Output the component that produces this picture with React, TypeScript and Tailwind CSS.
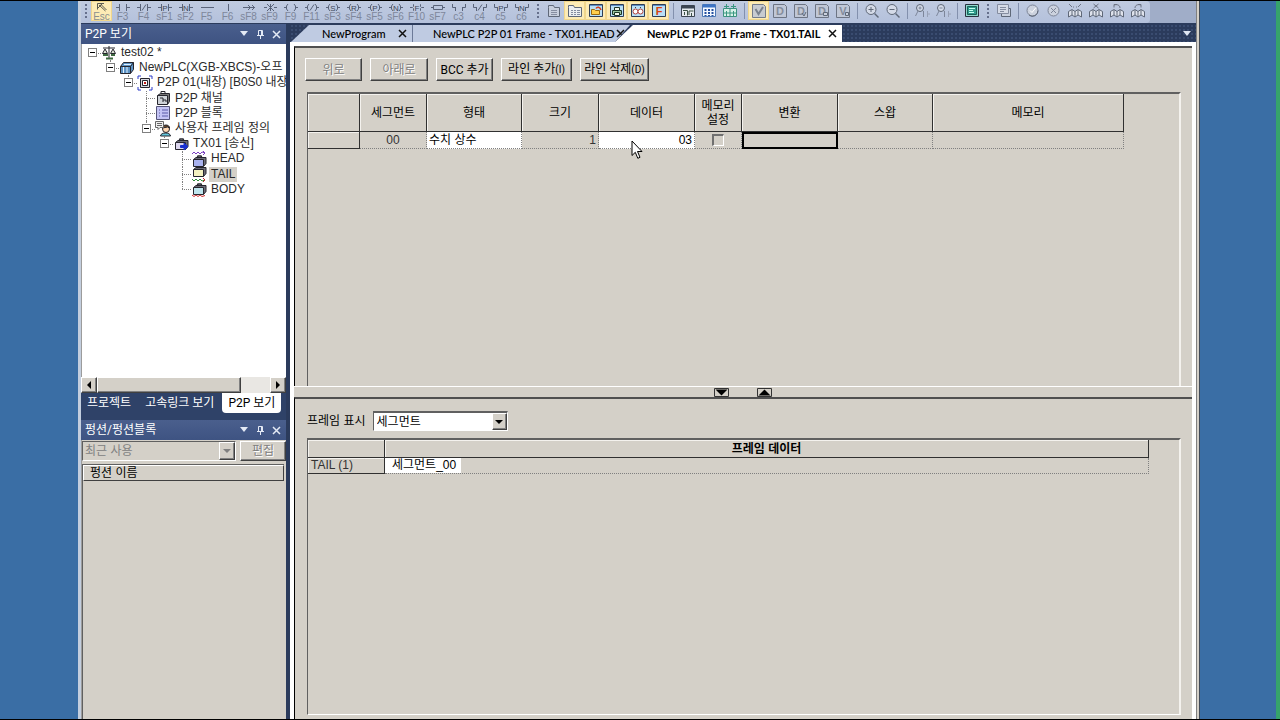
import React from 'react';
import { clsx } from 'clsx';

const RAISED = 'border border-t-white border-l-white border-r-[#404040] border-b-[#404040] bg-[#d4d0c8] shadow-[inset_-1px_-1px_0_#808080]';
const ICON = 'w-4 h-4 shrink-0';
const UI_FONT = "font-['Roboto','Noto_Sans_CJK_KR',sans-serif]";

/* ---------- toolbar ---------- */

interface LadderItem {
  label: string;
  kind: string;
}

const LADDER: LadderItem[] = [
  { label: 'F3', kind: 'contact' },
  { label: 'F4', kind: 'contact/' },
  { label: 'sF1', kind: 'contactP' },
  { label: 'sF2', kind: 'contactN' },
  { label: 'F5', kind: 'hline' },
  { label: 'F6', kind: 'vline' },
  { label: 'sF8', kind: 'arrow' },
  { label: 'sF9', kind: 'invert' },
  { label: 'F9', kind: 'coil' },
  { label: 'F11', kind: 'coil/' },
  { label: 'sF3', kind: 'coilS' },
  { label: 'sF4', kind: 'coilR' },
  { label: 'sF5', kind: 'coilP' },
  { label: 'sF6', kind: 'coilN' },
  { label: 'F10', kind: 'braceF' },
  { label: 'sF7', kind: 'box' },
  { label: 'c3', kind: 'or' },
  { label: 'c4', kind: 'or/' },
  { label: 'c5', kind: 'orP' },
  { label: 'c6', kind: 'orN' },
];

const LADDER_PATHS: Record<string, string> = {
  contact: 'M1 5.500h3M4.500 2v7M11.500 2v7M12 5.500h3',
  hline: 'M2 5.500h13',
  vline: 'M8.500 2v7',
  arrow: 'M2 5.500h12M7 3l2.500 2.500L7 8M11 3l2.500 2.500L11 8',
  invert: 'M2 5.500h3M12 5.500h3M5 2l7 7M12 2L5 9M8.500 2v7',
  coil: 'M1 5.500h2M5 2L3.500 4v3L5 9M11 2l1.500 2v3L11 9M13 5.500h2',
  brace: 'M1 5.500h2M5 2.500h-.5v2l-1 1 1 1v2H5M11 2.500h.5v2l1 1-1 1v2H11M13 5.500h2',
  box: 'M1 5.500h2M3.500 3.500h9v4h-9zM13 5.500h2',
  or: 'M1.500 2v3.500h3M4.500 5v4M11.500 5v4M11.500 5.500h3V2',
};

const LadderIcon: React.FC<{ kind: string }> = ({ kind }) => {
  const mark = /[/A-Z]$/.test(kind) ? kind.slice(-1) : '';
  const base = mark ? kind.slice(0, -1) : kind;
  return (
    <svg viewBox="0 0 16 10" className="w-4 h-[10px] shrink-0" fill="none" stroke="#5a6479">
      <path d={LADDER_PATHS[base]} />
      {mark === '/' && <path d="M6 8.500l4-6" />}
      {mark !== '' && mark !== '/' && (
        <text x="8" y="9" textAnchor="middle" fontSize="8" fill="#3f4859" stroke="none">{mark}</text>
      )}
    </svg>
  );
};

const Grip = () => (
  <span className="w-[10px] h-[19px] flex flex-col items-center justify-center gap-[2px] shrink-0">
    {[0, 1, 2, 3].map(i => <span key={i} className="w-[2px] h-[2px] bg-[#66708c]" />)}
  </span>
);

const Sep = () => <span className="w-2 h-[19px] shrink-0 flex items-center justify-center"><span className="w-px h-4 bg-[#8390ad]" /></span>;

interface ToolProps {
  name: string;
  on?: boolean;
  children: React.ReactNode;
}

const Tool: React.FC<ToolProps> = ({ name, on, children }) => (
  <button
    type="button"
    aria-label={name}
    className={clsx('w-[21px] h-[19px] shrink-0 flex items-center justify-center', on && 'bg-[#fdebb5] border border-[#f0d68c]')}
  >
    <svg viewBox="0 0 16 16" className={ICON} fill="none" stroke="#5f6878">{children}</svg>
  </button>
);

const Frame = () => (
  <>
    <path d="M1.500 1.500h13v12h-13z" fill="#b9e0f7" stroke="#2e3d55" />
    <path d="M2 2.500h12" stroke="#5f8fc4" />
  </>
);
const Letter: React.FC<{ c: string }> = ({ c }) => (
  <>
    <path d="M1.500 1.500h11l2 2v11h-13z" fill="#c0c7d6" stroke="#6c7484" />
    <text x="8" y="12" textAnchor="middle" fontSize="11" fontWeight="bold" fill="#858d9c" stroke="none">{c}</text>
  </>
);
const Book: React.FC<{ mark: string }> = ({ mark }) => (
  <>
    <path d="M1.500 14V8.500L5 6.500l3 2 3-2 3.500 2V14L11 12l-3 2-3-2zM8 8.500V14M5 7v5M11 7v5" fill="#dfe3ec" />
    <path d={mark} stroke="#6d7484" />
  </>
);

const Toolbar = () => (
  <div className="h-[22px] shrink-0 flex bg-[#a0adc8]">
    <div className="flex items-start gap-px bg-gradient-to-b from-[#c0cbe0] to-[#b4c1dc] pr-[2px] rounded-r-sm">
      <div className="flex">
        <Grip />
        <button type="button" className="w-[21px] h-5 shrink-0 flex flex-col items-center bg-[#fdebb5] border border-[#f0d68c] text-[10px] leading-[9px] text-[#8b8f8e]">
          <svg viewBox="0 0 16 10" className="w-4 h-[10px] shrink-0" fill="none" stroke="#5c5b50"><path d="M3.500 7.500v-6H10M5 3l6.500 6M8 2l-4 4M7 2.500L12.500 8" /></svg>
          Esc
        </button>
        {LADDER.map(item => (
          <button type="button" key={item.label} className="w-[21px] h-5 shrink-0 flex flex-col items-center pt-px text-[10px] leading-[9px] text-[#7e879b]">
            <LadderIcon kind={item.kind} />
            {item.label}
          </button>
        ))}
      </div>
      <div className="flex">
        <Grip />
        <Tool name="Project"><path d="M2.500 4.500V2.500h5l1 2h5v9h-11z" fill="#c8cfdd" /><path d="M5 7.500h6M5 9.500h6M5 11.500h6" stroke="#858da0" /></Tool>
        <Tool name="Variables" on><path d="M1.500 4.500V2.500h5l1 2h7v9h-13z" fill="#eceef0" /><path d="M4 7.500h2M7 7.500h2M10 7.500h3M4 9.500h2M7 9.500h2M10 9.500h3M4 11.500h2M7 11.500h2M10 11.500h3" stroke="#858da0" /></Tool>
        <Tool name="Open view" on><Frame /><path d="M3.500 6.500h3l1 1h4v4h-8z" fill="#ffcf4d" stroke="#9a6a10" /><path d="M8 5.500c1-2 4-2 5 1.500" stroke="#d43d1c" strokeWidth="1.500" /></Tool>
        <Tool name="Print view" on><Frame /><path d="M3.500 7.500h9v4h-9z" fill="#9cc7a0" stroke="#1d3526" /><path d="M5.500 4.500h5v3h-5zM5.500 9.500h5v3h-5z" fill="#f4f8ee" stroke="#1d3526" /></Tool>
        <Tool name="Find view" on><Frame /><circle cx="5.500" cy="8.500" r="2.500" fill="#fff" stroke="#b3423a" /><circle cx="10.500" cy="8.500" r="2.500" fill="#fff" stroke="#b3423a" /><path d="M5 5l1-1M11 5l-1-1" stroke="#39404c" /></Tool>
        <Tool name="Function view" on><Frame /><text x="8" y="12" textAnchor="middle" fontSize="11" fontWeight="bold" fill="#d8430f" stroke="none">F</text></Tool>
        <Sep />
        <Tool name="Monitor"><path d="M1.500 2.500h13v11h-13z" fill="#e6ebf0" stroke="#3b4552" /><path d="M2 4h12" stroke="#3b4552" strokeWidth="3" /><path d="M3 7.500h4.500v5M9 12V8h4.500M4.500 9v3M11.500 10v3" stroke="#3a5145" /></Tool>
        <Tool name="Device monitor"><path d="M1.500 1.500h13v12h-13z" fill="#f3f8ff" stroke="#4b77b5" /><path d="M2 3h12" stroke="#3c74c4" strokeWidth="3" /><path d="M4.500 6v7M8 6v7M11.500 6v7" stroke="#2450a0" strokeWidth="2" strokeDasharray="2 1" /></Tool>
        <Tool name="Trend monitor"><path d="M1.500 5.500h13v8h-13z" fill="#d7f1e9" stroke="#3d9280" /><path d="M4.500 1v5M2 3.500h5M11.500 1v5M9 3.500h5M4.500 8v5M8 6v7M11.500 8v5M2 10h12" stroke="#399780" /></Tool>
        <Sep />
        <Tool name="Check" on><path d="M1.500 1.500h11l2 2v11h-13z" fill="#c8cbd0" stroke="#747c8c" /><path d="M4.500 6l3 5 4.500-7" strokeWidth="2" stroke="#7b828e" /></Tool>
        <Tool name="Device"><Letter c="D" /></Tool>
        <Tool name="Device variable"><Letter c="D" /><path d="M9 10l2 3 2-4" /></Tool>
        <Tool name="Device comment"><Letter c="D" /><path d="M9.500 9.500h4v3h-4z" fill="#cbd1dd" /></Tool>
        <Tool name="Variable comment"><Letter c="V" /><path d="M10.500 9.500h3v3h-3z" fill="#cbd1dd" /></Tool>
        <Sep />
        <Tool name="Zoom in"><circle cx="7" cy="6.500" r="5" fill="#d5dbe8" /><path d="M7 4v5M4.500 6.500h5" /><path d="M10.500 10.500l4 4" strokeWidth="1.500" /></Tool>
        <Tool name="Zoom out"><circle cx="7" cy="6.500" r="5" fill="#d5dbe8" /><path d="M4.500 6.500h5" /><path d="M10.500 10.500l4 4" strokeWidth="1.500" /></Tool>
        <Sep />
        <Tool name="Widen"><circle cx="6" cy="5" r="3.500" fill="#d5dbe8" /><path d="M6 3.500v3M4.500 5h3M4 8l-2.500 5M9.500 8v6" stroke="#7d869a" /><path d="M13.500 8v6M14 11h2" stroke="#98a1b6" /></Tool>
        <Tool name="Narrow"><circle cx="6" cy="5" r="3.500" fill="#d5dbe8" /><path d="M4.500 5h3M4 8l-2.500 5M9.500 8v6" stroke="#7d869a" /><path d="M13.500 8v6M14 11h2" stroke="#98a1b6" /></Tool>
        <Sep />
        <Tool name="Full screen"><path d="M1.500 1.500h13v12h-13z" fill="#8fd8cc" stroke="#27323f" /><path d="M3.500 3.500h9v8h-9z" fill="#2f9e8c" stroke="#1d5f58" /><path d="M5 5.500h6M5 7.500h4M5 9.500h5" stroke="#c5fff0" /></Tool>
      </div>
      <div className="flex">
        <Grip />
        <Tool name="Copy window"><path d="M5.500 5.500h9v8h-9z" fill="#c9d0de" /><path d="M1.500 1.500h11v9h-11zM4 4.500h6M4 6.500h6M4 8.500h4" fill="#d6dbe6" stroke="#858da0" /></Tool>
        <Sep />
        <Tool name="Start"><circle cx="7.500" cy="7.500" r="5.500" fill="#ccd2de" stroke="#7d8597" /><path d="M5 7.500l2 2 4-5" stroke="#fff" /><path d="M4 12a5.500 5.500 0 0 0 9-4.500" /></Tool>
        <Tool name="Stop"><circle cx="7.500" cy="7.500" r="5.500" fill="#ccd2de" stroke="#7d8597" /><path d="M5 5l5 5M10 5l-5 5" stroke="#7d8597" /></Tool>
        <Tool name="Bookmark"><Book mark="M2 1l3 3M14 1l-3 3M6 4h1M9 4h1" /></Tool>
        <Tool name="Clear bookmarks"><Book mark="M5.500 1l5 4M10.500 1l-5 4" /></Tool>
        <Tool name="Previous bookmark"><Book mark="M5 4.500V1.500h3M5 2c3-1 6 0 6 3" /></Tool>
        <Tool name="Next bookmark"><Book mark="M11 4.500V1.500H8M11 2c-3-1-6 0-6 3" /></Tool>
      </div>
    </div>
  </div>
);

/* ---------- left side ---------- */

const PanelTitle: React.FC<{ title: string }> = ({ title }) => (
  <div className={clsx('h-5 shrink-0 flex items-center bg-gradient-to-b from-[#4a5f8d] to-[#3e5382] pl-1 pr-[2px] text-white text-[12px] leading-5', UI_FONT)}>
    <h2 className="flex-1 truncate">{title}</h2>
    <button type="button" aria-label="Menu" className="w-4 flex justify-center">
      <svg viewBox="0 0 10 6" className="w-[10px] h-[6px]" fill="#e4eaf5"><path d="M1 0h8L5 5z" /></svg>
    </button>
    <button type="button" aria-label="Pin" className="w-4 flex justify-center">
      <svg viewBox="0 0 9 10" className="w-[9px] h-[10px]" fill="none" stroke="#e4eaf5"><path d="M2.500 6V1.500h4V6M5.500 1v5M1 6.500h7M4.500 7v3" /></svg>
    </button>
    <button type="button" aria-label="Close" className="w-4 flex justify-center">
      <svg viewBox="0 0 9 9" className="w-[9px] h-[9px]" fill="none" stroke="#e4eaf5" strokeWidth="1.500"><path d="M1 1l7 7M8 1L1 8" /></svg>
    </button>
  </div>
);

interface TreeNode {
  depth: number;
  text: string;
  icon: string;
  open?: boolean;
  more?: boolean;
  selected?: boolean;
}

const TREE: TreeNode[] = [
  { depth: 0, text: 'test02 *', icon: 'project', open: true },
  { depth: 1, text: 'NewPLC(XGB-XBCS)-오프', icon: 'plc', open: true },
  { depth: 2, text: 'P2P 01(내장) [B0S0 내장', icon: 'module', open: true },
  { depth: 3, text: 'P2P 채널', icon: 'channel', more: true },
  { depth: 3, text: 'P2P 블록', icon: 'block', more: true },
  { depth: 3, text: '사용자 프레임 정의', icon: 'user', open: true },
  { depth: 4, text: 'TX01 [송신]', icon: 'send', open: true },
  { depth: 5, text: 'HEAD', icon: 'head', more: true },
  { depth: 5, text: 'TAIL', icon: 'tail', more: true, selected: true },
  { depth: 5, text: 'BODY', icon: 'body' },
];

const PAD = ['pl-px', 'pl-[19px]', 'pl-[37px]', 'pl-[55px]', 'pl-[73px]', 'pl-[91px]'];

const bag = (fill: string) => (
  <>
    <path d="M2.500 6.500L5 4.500h10v6l-2.500 3" fill="#6d6d78" />
    <path d="M2.500 6.500h10v7h-10z" fill={fill} />
    <path d="M6 5l1-2h3l1 2" strokeWidth="1.500" />
  </>
);

const TREE_ICONS: Record<string, React.ReactNode> = {
  project: <><path d="M2 3h12M8 1v13M1.500 8.500L4 4l2.500 4.500zM9.500 8.500L12 4l2.500 4.500z" fill="#dfe8d8" /><path d="M5 13.500h7M2 10h5M10 10h4" stroke="#3e6a42" strokeWidth="2" /></>,
  plc: <><path d="M1.500 6.500l3-4h10v7l-3 4h-10z" fill="#5b92c4" /><path d="M1.500 6.500h10v7M11.500 6.500l3-4" /><path d="M4.500 7v6M8 7v6M5 4.500h7" stroke="#e2f2ff" /></>,
  module: <><path d="M1 4V1h3M12 1h3v3M15 12v3h-3M4 15H1v-3" stroke="#2a3ac8" /><path d="M3.500 3.500h9v9h-9z" fill="#d9d9e2" /><path d="M5.500 5.500h5v5h-5z" fill="#fff" /><path d="M7 8h2" stroke="#c01818" strokeWidth="2" /></>,
  channel: <><path d="M2.500 5.500l3-2h9v8l-2 3" fill="#777" /><path d="M2.500 5.500h10v9h-10z" fill="#cfd3d8" /><path d="M6 3.500v-2h4v2M5 8h3v4M8 10h3v2" /></>,
  block: <><path d="M1.500 1.500h13v13h-13z" fill="#c4c4f4" stroke="#55557a" /><path d="M4 5h1M7 5h6M4 8h1M7 8h6M4 11h1M7 11h6" stroke="#5b5ba8" /></>,
  user: <><circle cx="11" cy="8" r="3.500" fill="#ffd7b0" /><path d="M7.500 7c0-4 7-4 7 0l-2-1z" fill="#6a4a2a" /><path d="M5.500 15c0-4 10-4 10 0z" fill="#63c7dc" /><path d="M.5.5h8v6H5l-2 2v-2H.5zM2 2.500h5M2 4.500h5" fill="#eee" stroke="#666" /></>,
  send: <>{bag('#dcd6ee')}<path d="M7.500 9.500H11V7l4 3.500-4 3.500v-2.500H7.500z" fill="#1830d0" stroke="#1830d0" /></>,
  head: <><g transform="translate(0 2)">{bag('#a9b2ee')}</g><path d="M1 3l2-2 2 2 2-2 2 2 2-2 3 1M12 0l2 2-2 2" stroke="#7a3fc0" /></>,
  tail: <><g transform="translate(0 -3)">{bag('#f3f1c0')}</g><path d="M1 13l2 2 2-2 2 2 2-2 2 2 3-1" stroke="#2f8a3a" /><path d="M12 12l2 2-2 2" stroke="#c02828" /></>,
  body: <>{bag('#bfe6ee')}<path d="M1 14l2 1.500L5 14l2 1.500L9 14l2 1.500 3-1" stroke="#d03030" /></>,
};

const TreeRow: React.FC<{ node: TreeNode }> = ({ node }) => (
  <li className={clsx('flex items-center min-h-0 whitespace-nowrap', PAD[node.depth])}>
    <span className="relative w-[18px] self-stretch shrink-0 flex items-center justify-center">
      {node.depth > 0 && (
        <span className={clsx('absolute left-[9px] top-0 border-l border-dotted border-[#808080]', node.more ? 'h-full' : 'h-1/2')} />
      )}
      <span className="absolute left-[9px] right-0 top-1/2 border-t border-dotted border-[#808080]" />
      {node.open && (
        <button type="button" aria-label={`Collapse ${node.text}`} className="relative w-[9px] h-[9px] bg-white border border-[#808080] flex items-center justify-center">
          <span className="w-[5px] h-px bg-black" />
        </button>
      )}
    </span>
    <svg viewBox="0 0 16 16" className={ICON} fill="none" stroke="#26262e">{TREE_ICONS[node.icon]}</svg>
    <span className={clsx('ml-[2px] px-[2px] h-[15px] leading-[15px]', node.selected && 'bg-[#d4d0c8]')}>{node.text}</span>
  </li>
);

const Triangle: React.FC<{ dir: 'left' | 'right' | 'down'; color?: string }> = ({ dir, color = '#000' }) => (
  <svg viewBox="0 0 8 8" className="w-2 h-2 shrink-0" fill={color}>
    <path d={dir === 'left' ? 'M6 0v8L2 4z' : dir === 'right' ? 'M2 0v8l4-4z' : 'M0 2h8L4 6z'} />
  </svg>
);

const Sidebar = () => (
  <aside className="w-[205px] shrink-0 flex flex-col bg-[#2f4268]">
    <PanelTitle title="P2P 보기" />
    <div className="h-[333px] shrink-0 bg-white border-l border-[#9c9c9c] overflow-hidden text-[12px] text-[#2a2a2a]">
      <ul className="h-[152px] mt-px grid auto-rows-fr">
        {TREE.map(node => <TreeRow key={node.text} node={node} />)}
      </ul>
    </div>
    <div className="h-4 shrink-0 flex bg-[#e9e7e3]">
      <button type="button" aria-label="Scroll left" className={clsx('w-4 flex items-center justify-center', RAISED)}><Triangle dir="left" /></button>
      <div className={clsx('w-36', RAISED)} />
      <div className="flex-1" />
      <button type="button" aria-label="Scroll right" className={clsx('w-4 flex items-center justify-center', RAISED)}><Triangle dir="right" /></button>
    </div>
    <nav className={clsx('h-[27px] shrink-0 flex items-start text-[12px] leading-5 text-white', UI_FONT)}>
      <button type="button" className="px-[6px] h-5">프로젝트</button>
      <button type="button" className="px-2 h-5">고속링크 보기</button>
      <button type="button" className="px-[6px] h-5 bg-white text-black rounded-b-sm">P2P 보기</button>
    </nav>
    <PanelTitle title="펑션/펑션블록" />
    <div className="flex-1 flex flex-col bg-[#d4d0c8] border-l border-[#9c9c9c] text-[12px]">
      <div className="h-[22px] flex gap-1 pt-px">
        <label className="relative flex-1 flex">
          <span className="sr-only">펑션 분류</span>
          <select disabled className="appearance-none w-full h-5 pl-[2px] leading-[18px] text-[#808080] bg-[#d4d0c8] border border-t-[#606060] border-l-[#606060] border-r-white border-b-white opacity-100">
            <option>최근 사용</option>
          </select>
          <span className={clsx('absolute right-px top-px w-4 h-[18px] flex items-center justify-center pointer-events-none', RAISED)}><Triangle dir="down" color="#808080" /></span>
        </label>
        <button type="button" disabled className={clsx('w-[46px] h-5 leading-4 text-[#808080] [text-shadow:1px_1px_0_#fff]', RAISED)}>편집</button>
      </div>
      <div className="flex-1 mt-[2px] mr-[2px] border-t border-l border-[#606060]">
        <div className="h-4 pl-[6px] leading-[14px] text-black border border-t-white border-l-white border-r-[#404040] border-b-[#404040]">펑션 이름</div>
      </div>
    </div>
  </aside>
);

/* ---------- document area ---------- */

const CloseX = () => (
  <svg viewBox="0 0 9 9" className="w-[9px] h-[9px] shrink-0" fill="none" stroke="#111" strokeWidth="1.500"><path d="M1 1l7 7M8 1L1 8" /></svg>
);

const DocTabs = () => (
  <div className="h-[18px] shrink-0 flex items-end pl-px bg-[#2b3b5c] bg-[radial-gradient(#3a4c70_1px,transparent_1px)] bg-[size:4px_4px] font-['Lato','Noto_Sans_CJK_KR',sans-serif] text-[11px] leading-4 font-medium text-black">
    <button type="button" className="w-[121px] h-[17px] flex items-center justify-between pl-[31px] pr-[5px] bg-[#bfcbe2] [clip-path:polygon(0_100%,18px_0,100%_0,100%_100%)]">
      NewProgram <CloseX />
    </button>
    <button type="button" className="w-[218px] h-[17px] flex items-center justify-between pl-5 pr-[5px] bg-[#bfcbe2] border-l border-[#6c7a98] [clip-path:polygon(0_0,100%_0,203px_100%,0_100%)]">
      NewPLC P2P 01 Frame - TX01.HEAD <CloseX />
    </button>
    <button type="button" className="w-[227px] -ml-[15px] h-[17px] flex items-center justify-between pl-8 pr-[5px] bg-white font-bold [clip-path:polygon(0_100%,18px_0,100%_0,100%_100%)]">
      NewPLC P2P 01 Frame - TX01.TAIL <CloseX />
    </button>
    <button type="button" aria-label="Tab list" className="ml-auto mr-1 h-4 flex items-center">
      <svg viewBox="0 0 10 6" className="w-[10px] h-[6px]" fill="#dfe6f2"><path d="M1 0h8L5 5z" /></svg>
    </button>
  </div>
);

const ACTIONS = [
  { label: '위로', width: 'w-[57px]', disabled: true },
  { label: '아래로', width: 'w-[58px]', disabled: true },
  { label: 'BCC 추가', width: 'w-[57px]' },
  { label: '라인 추가', hotkey: '(I)', width: 'w-[71px]' },
  { label: '라인 삭제', hotkey: '(D)', width: 'w-[69px]' },
];

const COLUMNS = [
  { label: '', width: 'w-[52px]' },
  { label: '세그먼트', width: 'w-[67px]' },
  { label: '형태', width: 'w-[95px]' },
  { label: '크기', width: 'w-[77px]' },
  { label: '데이터', width: 'w-[96px]' },
  { label: '메모리 설정', width: 'w-[47px]' },
  { label: '변환', width: 'w-[96px]' },
  { label: '스왑', width: 'w-[95px]' },
  { label: '메모리', width: 'w-[191px]' },
];

const TH = 'p-0 font-normal border-r border-b border-[#303030] shadow-[inset_1px_1px_0_#f4f2ee]';
const TD = 'p-0 border-r border-b border-dotted border-[#808080]';
const SUNKEN = 'border border-t-2 border-t-[#606060] border-l-[#606060] border-r-white border-b-white';

const Pointer = () => (
  <svg viewBox="0 0 12 20" className="absolute left-8 top-2 w-3 h-5 z-10" fill="#fff" stroke="#000">
    <path d="M1 1v14.500l3.300-3.200 2.500 6 2.200-1-2.500-5.800H11z" />
  </svg>
);

const SegmentPane = () => (
  <section className="h-[340px] shrink-0 flex flex-col border-t-2 border-t-[#505050] border-l border-l-black pt-[10px] pl-[10px] pr-[11px]">
    <div className="flex gap-2 h-6 shrink-0">
      {ACTIONS.map(a => (
        <button
          key={a.label}
          type="button"
          disabled={a.disabled}
          className={clsx('h-[23px] leading-5 whitespace-nowrap', UI_FONT, RAISED, a.width, a.disabled && 'text-[#808080] [text-shadow:1px_1px_0_#fff]')}
        >
          {a.label}
          {a.hotkey && <span className="text-[10px]">{a.hotkey}</span>}
        </button>
      ))}
    </div>
    <div className="flex-1 ml-[2px] mt-[10px] border-t-2 border-l border-t-[#606060] border-l-[#606060] border-r-2 border-r-[#f4f2ee]">
      <table className="table-fixed w-[816px] border-separate border-spacing-0">
        <thead>
          <tr className="h-[38px]">
            {COLUMNS.map((c, i) => (
              <th key={i} scope="col" className={clsx(TH, c.width, 'leading-[14px]')}>{c.label}</th>
            ))}
          </tr>
        </thead>
        <tbody>
          <tr className="h-[17px] leading-4">
            <th scope="row" aria-label="행 1" className={TH} />
            <td className={clsx(TD, 'text-center text-[#333]')}>00</td>
            <td className={clsx(TD, 'bg-white pl-[2px]')}>수치 상수</td>
            <td className={clsx(TD, 'text-right pr-[2px] text-[#333]')}>1</td>
            <td className={clsx(TD, 'relative bg-white text-right pr-[2px]')}>03<Pointer /></td>
            <td className={TD}>
              <input
                type="checkbox"
                aria-label="메모리 설정"
                className="block mx-auto appearance-none w-3 h-3 bg-[#d4d0c8] border border-t-2 border-l-2 border-t-[#707070] border-l-[#707070] border-r-white border-b-white"
              />
            </td>
            <td className="p-0 border-2 border-black" />
            <td className={TD} />
            <td className={TD} />
          </tr>
        </tbody>
      </table>
    </div>
  </section>
);

const Splitter = () => (
  <div className="h-[11px] shrink-0 flex items-center justify-center gap-7 border-t border-white">
    <button type="button" aria-label="Move splitter down" className="w-[15px] h-[9px]">
      <svg viewBox="0 0 15 9" className="w-[15px] h-[9px]" fill="none" stroke="#333"><path d="M.5.5h14v8H.5z" /><path d="M1.500 1.500h12l-6 6z" fill="#000" stroke="none" /></svg>
    </button>
    <button type="button" aria-label="Move splitter up" className="w-[15px] h-[9px]">
      <svg viewBox="0 0 15 9" className="w-[15px] h-[9px]" fill="none" stroke="#333"><path d="M.5.5h14v8H.5z" /><path d="M1.500 7.500h12l-6-6z" fill="#000" stroke="none" /></svg>
    </button>
  </div>
);

const FramePane = () => (
  <section className="flex-1 min-h-0 flex flex-col border-t-2 border-t-[#505050] border-l border-l-black pt-3 pl-3 pr-[11px] pb-1">
    <div className="flex items-center gap-[7px] h-5 shrink-0">
      <label htmlFor="frame-view" className="leading-5">프레임 표시</label>
      <div className="relative w-[135px] h-5">
        <select id="frame-view" className={clsx('appearance-none w-full h-5 pl-[3px] leading-4 bg-white', SUNKEN)}>
          <option>세그먼트</option>
        </select>
        <span className={clsx('absolute right-px top-[2px] w-[15px] h-[17px] flex items-center justify-center pointer-events-none', RAISED)}><Triangle dir="down" /></span>
      </div>
    </div>
    <div className="flex-1 mt-[7px] border-t-2 border-l border-t-[#606060] border-l-[#606060] border-r-2 border-b border-r-[#f4f2ee] border-b-white">
      <table className="table-fixed w-[841px] border-separate border-spacing-0">
        <thead>
          <tr className="h-[18px] leading-4">
            <th aria-label="프레임" className={clsx(TH, 'w-[77px]')} />
            <th scope="col" className={clsx(TH, 'font-semibold')}>프레임 데이터</th>
          </tr>
        </thead>
        <tbody>
          <tr className="h-4 leading-[15px]">
            <th scope="row" className={clsx(TH, 'text-left pl-[3px] text-[#333]')}>TAIL (1)</th>
            <td className={TD}><span className="block w-[76px] pl-[7px] bg-white">세그먼트_00</span></td>
          </tr>
        </tbody>
      </table>
    </div>
  </section>
);

export default function App() {
  return (
    <div className="h-screen flex bg-[#3a6ea5] border-y border-black overflow-hidden text-[12px] text-black font-['Liberation_Sans','Noto_Sans_CJK_KR',sans-serif]">
      <div className="w-[78px] shrink-0" />
      <div className="flex-1 min-w-0 flex border-l-[3px] border-[#c3cede]">
        <div className="flex-1 min-w-0 flex flex-col bg-[#2b3b5c]">
          <Toolbar />
          <div className="flex-1 min-h-0 flex mt-px gap-1">
            <Sidebar />
            <main className="flex-1 min-w-0 flex flex-col">
              <DocTabs />
              <div className="flex-1 min-h-0 flex flex-col bg-[#d4d0c8] border-4 border-b-0 border-white">
                <SegmentPane />
                <Splitter />
                <FramePane />
              </div>
            </main>
          </div>
        </div>
        <div className="w-1 shrink-0 bg-[#d4d0c8] border-l border-r border-l-[#808080] border-r-[#404a58]" />
      </div>
      <div className="w-[76px] shrink-0" />
      <div className="w-1 shrink-0 bg-[#36a36b]" />
    </div>
  );
}
